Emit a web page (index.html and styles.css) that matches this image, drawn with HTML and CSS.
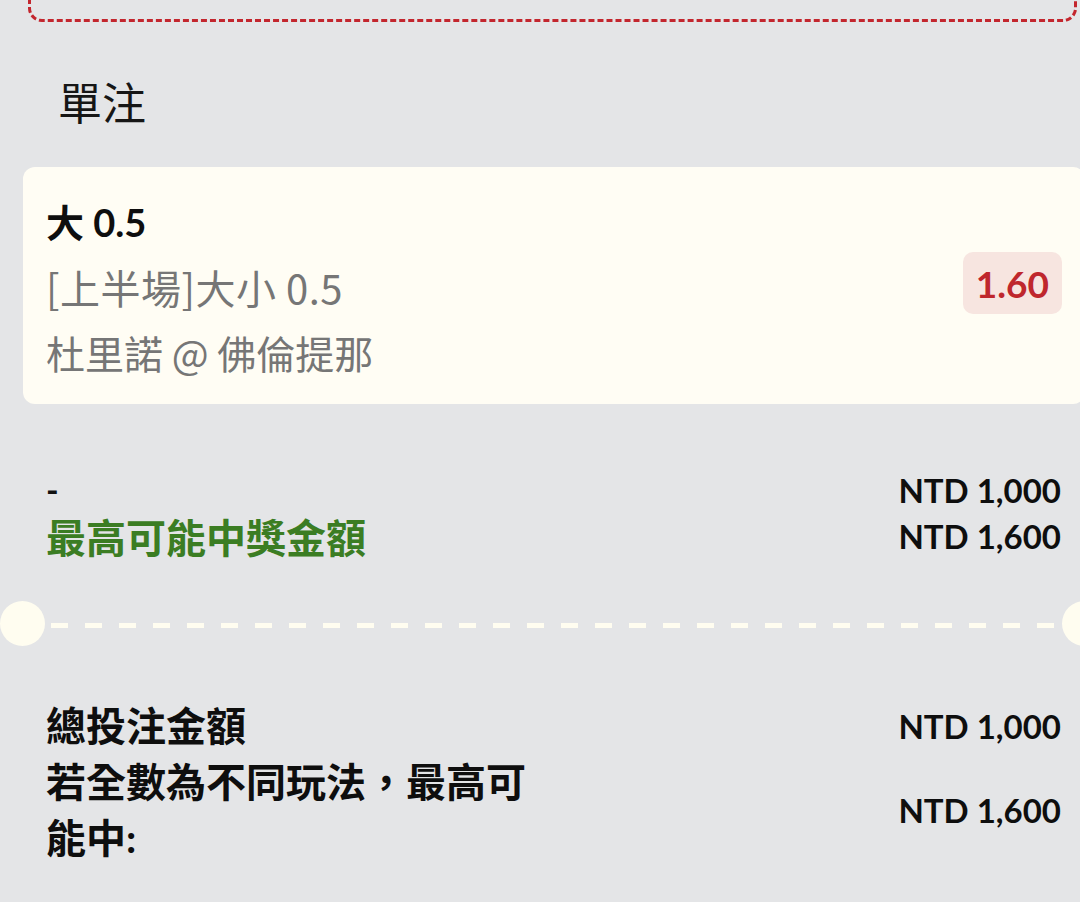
FILE: index.html
```html
<!DOCTYPE html>
<html lang="zh-Hant">
<head>
<meta charset="utf-8">
<title>單注</title>
<link rel="stylesheet" href="styles.css">
</head>
<body>
<div class="page">
  <div class="prev-box"></div>
  <h2 class="section-title">單注</h2>
  <div class="bet-card">
    <div class="bet-info">
      <div class="bet-pick">大 0.5</div>
      <div class="bet-sub bet-market">[上半場]大小 0.5</div>
      <div class="bet-sub">杜里諾 @ 佛倫提那</div>
    </div>
    <div class="odds">1.60</div>
  </div>
  <div class="stake">
    <div class="stake-row">
      <span class="stake-label">-</span>
      <span class="amount">NTD 1,000</span>
    </div>
    <div class="stake-row">
      <span class="win-label">最高可能中獎金額</span>
      <span class="amount">NTD 1,600</span>
    </div>
  </div>
  <div class="separator">
    <span class="notch"></span>
    <span class="dash-line"></span>
    <span class="notch"></span>
  </div>
  <div class="totals">
    <div class="total-row">
      <span class="total-label">總投注金額</span>
      <span class="amount">NTD 1,000</span>
    </div>
    <div class="total-row">
      <span class="total-label">若全數為不同玩法，最高可能中:</span>
      <span class="amount">NTD 1,600</span>
    </div>
  </div>
</div>
</body>
</html>
```

FILE: styles.css
```css
html, body {
  margin: 0;
  padding: 0;
  background: #e4e5e7;
  overflow: hidden;
}
body {
  width: 1080px;
  height: 902px;
  font-family: Lato, "Noto Sans CJK TC", sans-serif;
  color: #111;
}
.page {
  width: 1080px;
}
.prev-box {
  margin-top: -80px;
  margin-left: 28px;
  width: 1043px;
  height: 96px;
  border: 3px dashed #c3262e;
  border-radius: 14px;
}
.section-title {
  margin: 49px 0 0 58px;
  font-family: "Noto Sans CJK TC", sans-serif;
  font-weight: 400;
  font-size: 44px;
  line-height: 60px;
  color: #161616;
}
.bet-card {
  margin: 36px 0 0 23px;
  width: 1062px;
  box-sizing: border-box;
  padding: 23px 23px 19px 23px;
  background: #fffdf4;
  border-radius: 12px;
  display: flex;
  align-items: center;
  justify-content: space-between;
}
.bet-info {
  display: flex;
  flex-direction: column;
}
.bet-pick {
  font-family: Lato, "Noto Sans CJK TC", sans-serif;
  font-weight: 700;
  font-size: 38px;
  line-height: 65px;
  color: #0e0e0e;
}
.bet-sub {
  font-family: "Noto Sans CJK TC", sans-serif;
  font-weight: 400;
  font-size: 39px;
  line-height: 65px;
  color: #767676;
}
.bet-market {
  font-size: 40px;
  letter-spacing: 0.5px;
}
.odds {
  margin-bottom: 9px;
  height: 62px;
  padding: 0 13px;
  box-sizing: border-box;
  display: flex;
  align-items: center;
  background: #f7e5e0;
  border-radius: 10px;
  font-family: Lato, sans-serif;
  font-weight: 700;
  font-size: 37px;
  color: #bf272d;
}
.stake {
  margin: 63px 19px 0 46px;
}
.stake-row {
  display: flex;
  justify-content: space-between;
  align-items: center;
  height: 46px;
  line-height: 46px;
}
.stake-label {
  font-family: Lato, sans-serif;
  font-weight: 700;
  font-size: 34px;
  line-height: 46px;
}
.win-label {
  font-family: "Noto Sans CJK TC", sans-serif;
  font-weight: 700;
  font-size: 40px;
  line-height: 46px;
  color: #3b7d23;
}
.amount {
  font-family: Lato, sans-serif;
  font-weight: 700;
  font-size: 33px;
  line-height: 46px;
  color: #0e0e0e;
  white-space: nowrap;
}
.separator {
  margin-top: 42px;
  width: 1107px;
  height: 45px;
  display: flex;
  align-items: center;
}
.notch {
  flex: 0 0 45px;
  height: 45px;
  border-radius: 50%;
  background: #fffdf0;
}
.dash-line {
  flex: 1;
  margin: 3px 5px 0 6px;
  height: 5px;
  background: repeating-linear-gradient(to right, #fffdf0 0 17px, transparent 17px 34px);
}
.totals {
  margin: 52px 19px 0 46px;
}
.total-row {
  display: flex;
  justify-content: space-between;
  align-items: center;
}
.total-label {
  max-width: 500px;
  font-family: Lato, "Noto Sans CJK TC", sans-serif;
  font-weight: 700;
  font-size: 40px;
  line-height: 56px;
  color: #0e0e0e;
}
```
